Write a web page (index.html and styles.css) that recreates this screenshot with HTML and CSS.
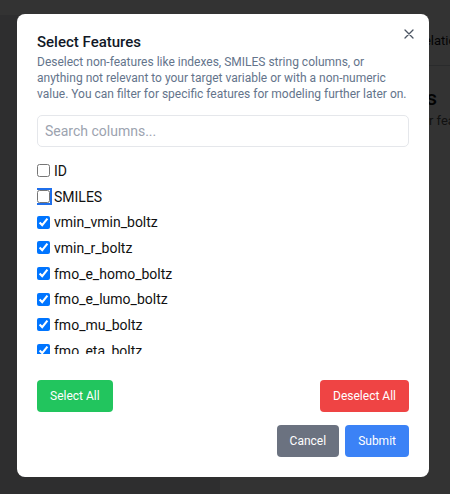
FILE: index.html
```html
<!DOCTYPE html>
<html lang="en">
  <head>
    <meta charset="utf-8" />
    <title>Select Features</title>
    <link rel="stylesheet" href="styles.css">
  </head>
  <body>
    <div class="page">
      <div class="page__header"></div>
      <div class="page__body">
        <div class="page__side"></div>
        <div class="page__panel">
          <div class="page__tabs">
            <span class="page__tab">Data</span>
            <span class="page__tab">Distributions</span>
            <span class="page__tab">Correlations</span>
          </div>
          <div class="page__heading">Features</div>
          <div class="page__sub">for features</div>
        </div>
      </div>
    </div>

    <div class="overlay">
      <div class="modal">
        <button class="modal__close" aria-label="Close">
          <svg width="10" height="10" viewBox="0 0 10 10">
            <path d="M1 1 L9 9 M9 1 L1 9" stroke="#4b5563" stroke-width="1.3" stroke-linecap="round" fill="none"/>
          </svg>
        </button>
        <h2 class="modal__title">Select Features</h2>
        <p class="modal__desc">Deselect non-features like indexes, SMILES string columns, or anything not relevant to your target variable or with a non-numeric value. You can filter for specific features for modeling further later on.</p>
        <input class="modal__search" type="text" placeholder="Search columns...">

        <div class="features">
          <label class="feature"><input type="checkbox"> ID</label>
          <label class="feature"><input type="checkbox" class="focused"> SMILES</label>
          <label class="feature"><input type="checkbox" checked> vmin_vmin_boltz</label>
          <label class="feature"><input type="checkbox" checked> vmin_r_boltz</label>
          <label class="feature"><input type="checkbox" checked> fmo_e_homo_boltz</label>
          <label class="feature"><input type="checkbox" checked> fmo_e_lumo_boltz</label>
          <label class="feature"><input type="checkbox" checked> fmo_mu_boltz</label>
          <label class="feature"><input type="checkbox" checked> fmo_eta_boltz</label>
        </div>

        <div class="modal__row">
          <button class="btn btn--green">Select All</button>
          <button class="btn btn--red">Deselect All</button>
        </div>
        <div class="modal__row modal__row--end">
          <button class="btn btn--gray">Cancel</button>
          <button class="btn btn--blue">Submit</button>
        </div>
      </div>
    </div>
  </body>
</html>
```

FILE: styles.css
```css
* {
  box-sizing: border-box;
}

body {
  margin: 0;
  font-family: Roboto, "Noto Sans", sans-serif;
  background: #e5e7eb;
}

.page {
  height: 494px;
  display: flex;
  flex-direction: column;
  overflow: hidden;
}

.page__header {
  height: 15px;
  background: #fff;
}

.page__body {
  flex: 1;
  display: flex;
}

.page__side {
  width: 220px;
}

.page__panel {
  flex: 1;
  background: #fff;
  overflow: hidden;
}

.page__tabs {
  height: 51px;
  border-bottom: 1px solid #d1d5db;
  display: flex;
  align-items: center;
  gap: 16px;
  padding-left: 47px;
  font-size: 13px;
  color: #111;
  white-space: nowrap;
}

.page__heading {
  width: 217px;
  margin-top: 20px;
  text-align: right;
  font-size: 21px;
  font-weight: 500;
  color: #111;
}

.page__sub {
  margin-top: 3px;
  padding-left: 197px;
  font-size: 13px;
  color: #555;
  white-space: nowrap;
}

.overlay {
  position: fixed;
  inset: 0;
  background: rgba(0, 0, 0, 0.8);
  padding: 14px 0 0 17px;
}

.modal {
  position: relative;
  width: 412px;
  height: 463px;
  background: #fff;
  border-radius: 8px;
  padding: 16px 20px 20px;
}

.modal__close {
  position: absolute;
  top: 15px;
  right: 15px;
  border: 0;
  background: none;
  padding: 0;
  width: 10px;
  height: 10px;
  display: flex;
}

.modal__title {
  margin: 0;
  font-size: 15px;
  line-height: 24px;
  font-weight: 500;
  color: #111827;
}

.modal__desc {
  margin: 0;
  font-size: 12px;
  line-height: 16px;
  color: #64748b;
}

.modal__search {
  display: block;
  width: 100%;
  height: 32px;
  margin-top: 13px;
  border: 1px solid #e5e7eb;
  border-radius: 5px;
  padding: 0 7px;
  font-family: inherit;
  font-size: 14px;
}

.modal__search::placeholder {
  color: #9ca3af;
}

.features {
  margin-top: 11px;
  height: 196px;
  overflow: hidden;
}

.feature {
  display: flex;
  align-items: center;
  height: 25.7px;
  font-size: 14px;
  color: #111;
}

.feature input {
  width: 13px;
  height: 13px;
  margin: 0 4px 0 0;
}

.feature input.focused {
  outline: 2px solid #1f6feb;
  outline-offset: 0;
  border-radius: 3px;
}

.modal__row {
  display: flex;
  justify-content: space-between;
  margin-top: 26px;
}

.modal__row--end {
  justify-content: flex-end;
  gap: 6px;
  margin-top: 13px;
}

.btn {
  height: 32px;
  border: 0;
  border-radius: 4px;
  padding: 0 13px;
  font-family: inherit;
  font-size: 12px;
  font-weight: 400;
  color: #fff;
}

.btn--green {
  background: #22c55e;
}

.btn--red {
  background: #ef4444;
}

.btn--gray {
  background: #6b7280;
}

.btn--blue {
  background: #3b82f6;
}
```
